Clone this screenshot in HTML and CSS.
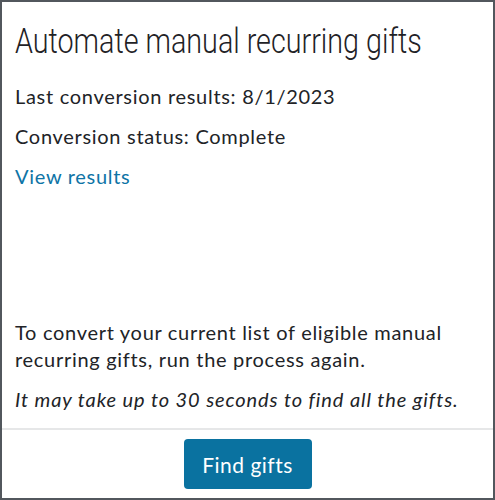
FILE: index.html
```html
<!DOCTYPE html>
<html>
<head>
<meta charset="utf-8">
<link rel="stylesheet" href="styles.css">
</head>
<body>
<div class="card">
  <div class="content">
    <h1 class="title"><span class="title-text">Automate manual recurring gifts</span></h1>
    <p class="line">Last conversion results: 8/1/2023</p>
    <p class="line">Conversion status: Complete</p>
    <p class="line"><a class="link" href="#">View results</a></p>
    <div class="spacer"></div>
    <p class="line">To convert your current list of eligible manual recurring gifts, run the process again.</p>
    <p class="line note">It may take up to 30 seconds to find all the gifts.</p>
  </div>
  <div class="footer">
    <button class="btn">Find gifts</button>
  </div>
</div>
</body>
</html>
```
FILE: styles.css
```css
html, body {
  margin: 0;
  padding: 0;
  background: #ffffff;
}
.card {
  box-sizing: border-box;
  width: 495px;
  height: 500px;
  border: 2px solid #52575d;
  display: flex;
  flex-direction: column;
  font-family: "Lato", "Open Sans", sans-serif;
  color: #212327;
}
.content {
  flex: 1;
  display: flex;
  flex-direction: column;
  padding: 18px 13px 15px 13px;
}
.title {
  margin: 0 0 19px 0;
  font-family: "Roboto", sans-serif;
  font-weight: 300;
  font-size: 35px;
  line-height: 44px;
  color: #1f2226;
  white-space: nowrap;
}
.title-text {
  display: inline-block;
  transform: scaleX(0.82);
  transform-origin: left center;
}
.line {
  margin: 0 0 13px 0;
  font-size: 20px;
  line-height: 27px;
  letter-spacing: 0.7px;
}
.spacer {
  flex: 1;
}
.note {
  font-style: italic;
  margin-bottom: 0;
  letter-spacing: 0.9px;
}
.link {
  color: #0e74a6;
  text-decoration: none;
}
.footer {
  border-top: 2px solid #e6e7e8;
  display: flex;
  justify-content: center;
  padding: 9px 0 9px 0;
}
.btn {
  font-family: "Lato", "Open Sans", sans-serif;
  font-size: 21px;
  letter-spacing: 0.5px;
  color: #ffffff;
  background: #0a72a0;
  border: none;
  border-radius: 4px;
  width: 128px;
  height: 50px;
  cursor: pointer;
}
```
